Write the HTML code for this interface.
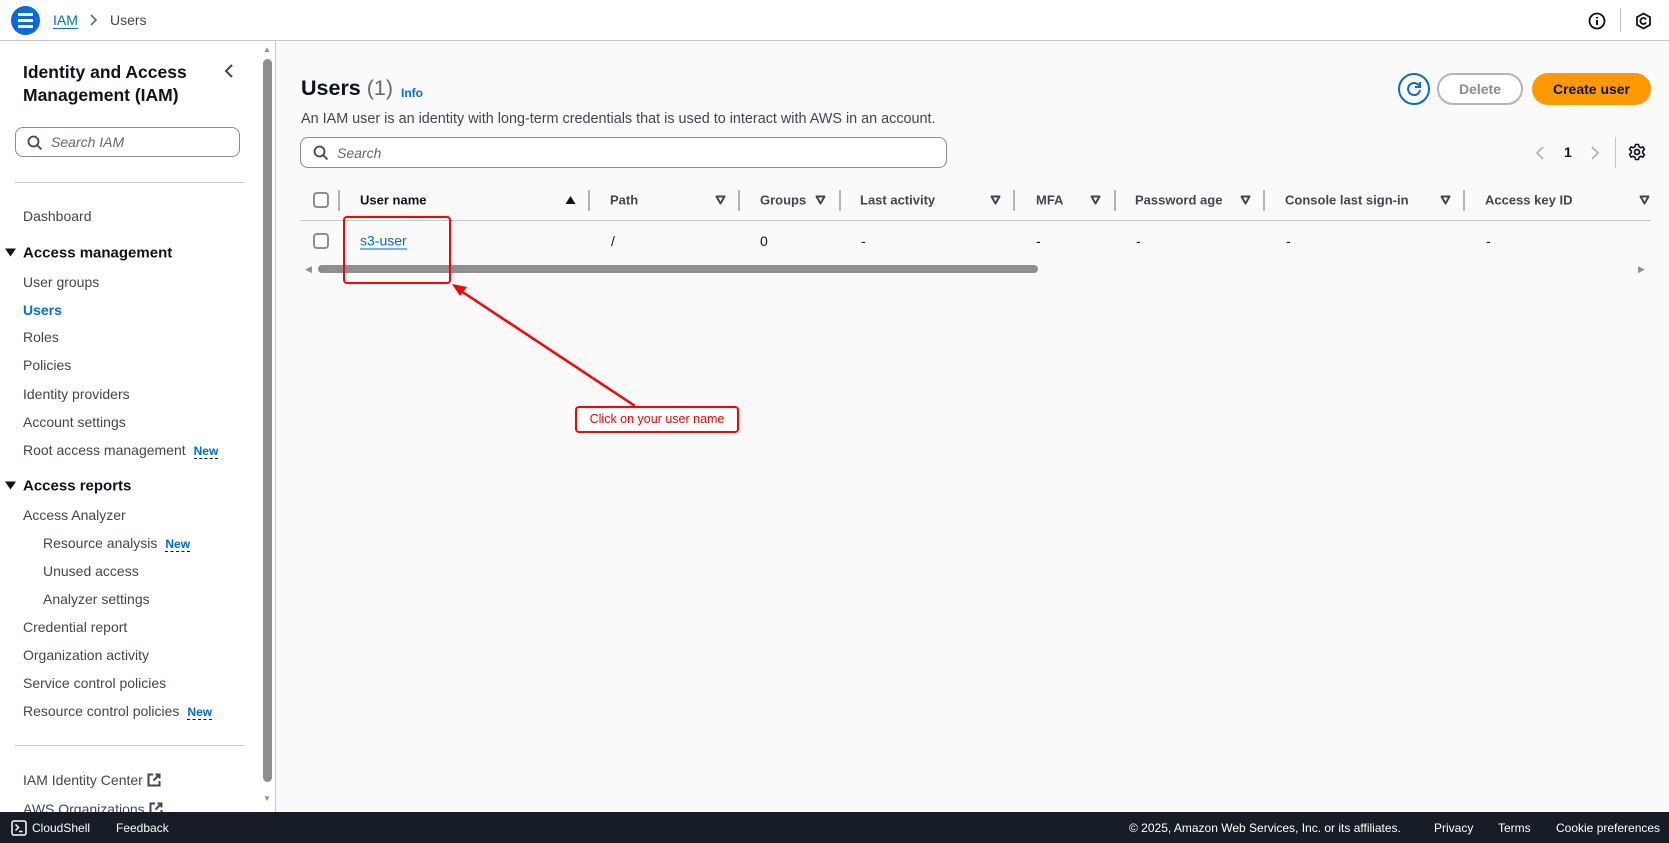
<!DOCTYPE html>
<html><head><meta charset="utf-8"><style>
*{box-sizing:border-box;margin:0;padding:0}
body{width:1669px;height:843px;overflow:hidden;font-family:"Liberation Sans",sans-serif;font-size:14px;color:#0f141a;background:#fafafa;position:relative}
.a{position:absolute;white-space:nowrap}
.hdr{position:absolute;left:0;top:0;width:1669px;height:41px;background:#fff;border-bottom:1px solid #c6c6cd}
.side{position:absolute;left:0;top:41px;width:276px;height:771px;background:#fff;border-right:1px solid #c6c6cd}
.nav{position:absolute;left:23px;color:#424650;font-size:14px;transform:translateY(-50%)}
.sec{position:absolute;left:23px;font-weight:bold;font-size:15px;transform:translateY(-50%)}
.sec svg{position:absolute;left:-18px;top:4px}
.new{color:#006ce0;font-weight:bold;font-size:12px;border-bottom:1px dashed #0f141a;margin-left:8px}
.th{position:absolute;top:200px;transform:translateY(-50%);font-weight:bold;color:#424650;font-size:13px}
.dv{position:absolute;top:190px;width:2px;height:21px;background:#b4b4bb}
.tri{position:absolute;top:195px}
.td{position:absolute;top:241px;transform:translateY(-50%)}
.foot{position:absolute;left:0;top:812px;width:1669px;height:31px;background:#161d26;color:#fff;font-size:12px}
.foot span{position:absolute;top:9px}
</style></head><body>
<div class="hdr">
 <div class="a" style="left:11px;top:6px;width:29px;height:29px;border-radius:50%;background:#006ce0"></div>
 <div class="a" style="left:18px;top:13px;width:15px;height:2.5px;background:#fff;box-shadow:0 6px 0 #fff,0 12px 0 #fff"></div>
 <div class="a" style="left:53px;top:12px;color:#006ce0;border-bottom:1px solid #006ce0;line-height:16px">IAM</div>
 <svg class="a" style="left:88px;top:13px" width="10" height="14" viewBox="0 0 10 14"><path d="M3 2l5 5-5 5" fill="none" stroke="#656871" stroke-width="1.6"/></svg>
 <div class="a" style="left:110px;top:12px;color:#424650">Users</div>
 <svg class="a" style="left:1588px;top:12px" width="18" height="18" viewBox="0 0 18 18"><circle cx="9" cy="9" r="7.5" fill="none" stroke="#0f141a" stroke-width="1.8"/><path d="M9 8v5M9 5v1.5" stroke="#0f141a" stroke-width="2"/></svg>
 <div class="a" style="left:1620px;top:8px;width:1px;height:24px;background:#c6c6cd"></div>
 <svg class="a" style="left:1635px;top:12px" width="17" height="18" viewBox="0 0 17 18"><path d="M8.5 1.5l6.5 3.7v7.6l-6.5 3.7-6.5-3.7V5.2z" fill="none" stroke="#0f141a" stroke-width="1.8"/><path d="M11 7.5a3 3 0 1 0 0 3" fill="none" stroke="#0f141a" stroke-width="1.8"/></svg>
</div>
<div class="side">
 <div class="a" style="left:23px;top:20px;font-weight:bold;font-size:17.5px;line-height:23px;white-space:normal;width:200px">Identity and Access Management (IAM)</div>
 <svg class="a" style="left:223px;top:22px" width="12" height="16" viewBox="0 0 12 16"><path d="M9 2L3 8l6 6" fill="none" stroke="#424650" stroke-width="2"/></svg>
 <div class="a" style="left:15px;top:86px;width:225px;height:30px;border:1px solid #8c8c94;border-radius:8px"></div>
 <svg class="a" style="left:27px;top:94px" width="16" height="16" viewBox="0 0 16 16"><circle cx="6.5" cy="6.5" r="5" fill="none" stroke="#424650" stroke-width="1.8"/><path d="M10 10l4.5 4.5" stroke="#424650" stroke-width="1.8"/></svg>
 <div class="a" style="left:51px;top:93px;color:#656871;font-style:italic">Search IAM</div>
 <div class="a" style="left:15px;top:141px;width:229px;height:1px;background:#c6c6cd"></div>
 <div class="nav" style="top:175px">Dashboard</div>
 <div class="sec" style="top:212px"><svg width="11" height="9" viewBox="0 0 11 9"><path d="M0 0h11L5.5 8z" fill="#0f141a"/></svg>Access management</div>
 <div class="nav" style="top:241px">User groups</div>
 <div class="nav" style="top:269px;color:#006ce0;font-weight:bold">Users</div>
 <div class="nav" style="top:296px">Roles</div>
 <div class="nav" style="top:324px">Policies</div>
 <div class="nav" style="top:353px">Identity providers</div>
 <div class="nav" style="top:381px">Account settings</div>
 <div class="nav" style="top:409px">Root access management<span class="new">New</span></div>
 <div class="sec" style="top:445px"><svg width="11" height="9" viewBox="0 0 11 9"><path d="M0 0h11L5.5 8z" fill="#0f141a"/></svg>Access reports</div>
 <div class="nav" style="top:474px">Access Analyzer</div>
 <div class="nav" style="top:502px;left:43px">Resource analysis<span class="new">New</span></div>
 <div class="nav" style="top:530px;left:43px">Unused access</div>
 <div class="nav" style="top:558px;left:43px">Analyzer settings</div>
 <div class="nav" style="top:586px">Credential report</div>
 <div class="nav" style="top:614px">Organization activity</div>
 <div class="nav" style="top:642px">Service control policies</div>
 <div class="nav" style="top:670px">Resource control policies<span class="new">New</span></div>
 <div class="a" style="left:15px;top:704px;width:229px;height:1px;background:#c6c6cd"></div>
 <div class="nav" style="top:739px">IAM Identity Center <svg width="14" height="14" viewBox="0 0 14 14" style="vertical-align:-2px"><path d="M6 1.5H1.5v11h11V8M8.5 1.5h4v4M12.5 1.5L6.5 7.5" fill="none" stroke="#424650" stroke-width="2"/></svg></div>
 <div class="nav" style="top:768px">AWS Organizations <svg width="14" height="14" viewBox="0 0 14 14" style="vertical-align:-2px"><path d="M6 1.5H1.5v11h11V8M8.5 1.5h4v4M12.5 1.5L6.5 7.5" fill="none" stroke="#424650" stroke-width="2"/></svg></div>
 <div class="a" style="left:263px;top:18px;width:9px;height:723px;background:#8f8f8f;border-radius:5px"></div>
 <div class="a" style="left:263px;top:4px;font-size:8px;color:#8f8f8f">&#9650;</div>
 <div class="a" style="left:263px;top:753px;font-size:8px;color:#8f8f8f">&#9660;</div>
</div>
<div class="a" style="left:301px;top:76px;font-size:21.5px;font-weight:bold">Users <span style="font-weight:normal;color:#656871">(1)</span></div>
<div class="a" style="left:401px;top:86px;font-size:12px;font-weight:bold;color:#006ce0">Info</div>
<div class="a" style="left:301px;top:111px;color:#424650;font-size:14.4px">An IAM user is an identity with long-term credentials that is used to interact with AWS in an account.</div>
<div class="a" style="left:300px;top:137px;width:647px;height:31px;border:1px solid #8c8c94;border-radius:8px;background:#fff"></div>
<svg class="a" style="left:313px;top:145px" width="16" height="16" viewBox="0 0 16 16"><circle cx="6.5" cy="6.5" r="5" fill="none" stroke="#424650" stroke-width="1.8"/><path d="M10 10l4.5 4.5" stroke="#424650" stroke-width="1.8"/></svg>
<div class="a" style="left:337px;top:145px;color:#656871;font-style:italic">Search</div>
<div class="a" style="left:1398px;top:73px;width:32px;height:32px;border:2px solid #006ce0;border-radius:50%;background:#fff"></div>
<svg class="a" style="left:1405px;top:80px" width="18" height="18" viewBox="0 0 18 18"><path d="M14.5 6.5A6 6 0 1 0 15 10" fill="none" stroke="#006ce0" stroke-width="2"/><path d="M15 2v5h-5" fill="none" stroke="#006ce0" stroke-width="2"/></svg>
<div class="a" style="left:1437px;top:73px;width:86px;height:32px;border:2px solid #b4b4bb;border-radius:16px;background:#fff;color:#8c8c94;font-weight:bold;text-align:center;line-height:28px">Delete</div>
<div class="a" style="left:1532px;top:73px;width:119px;height:32px;border-radius:16px;background:#ff9900;color:#0f141a;font-weight:bold;text-align:center;line-height:32px">Create user</div>
<svg class="a" style="left:1534px;top:145px" width="12" height="16" viewBox="0 0 12 16"><path d="M9 2L3 8l6 6" fill="none" stroke="#b4b4bb" stroke-width="1.8"/></svg>
<div class="a" style="left:1564px;top:144px;font-weight:bold">1</div>
<svg class="a" style="left:1589px;top:145px" width="12" height="16" viewBox="0 0 12 16"><path d="M3 2l6 6-6 6" fill="none" stroke="#b4b4bb" stroke-width="1.8"/></svg>
<div class="a" style="left:1615px;top:137px;width:1px;height:31px;background:#c6c6cd"></div>
<svg class="a" style="left:1628px;top:143px" width="18" height="18" viewBox="0 0 18 18"><circle cx="9" cy="9" r="2.5" fill="none" stroke="#0f141a" stroke-width="1.8"/><path d="M7.5 1.5h3l.5 2.2 1.8 1 2.1-.8 1.5 2.6-1.7 1.5v2l1.7 1.5-1.5 2.6-2.1-.8-1.8 1-.5 2.2h-3l-.5-2.2-1.8-1-2.1.8L1.6 11.4l1.7-1.5v-2L1.6 6.5l1.5-2.6 2.1.8 1.8-1z" fill="none" stroke="#0f141a" stroke-width="1.6"/></svg>
<div class="a" style="left:313px;top:192px;width:16px;height:16px;border:2px solid #8c8c94;border-radius:4px;background:#fff"></div>
<div class="dv" style="left:338px"></div>
<div class="th" style="left:360px;color:#0f141a">User name</div>
<svg class="tri" style="left:565px" width="11" height="10" viewBox="0 0 11 10"><path d="M0.5 9h10L5.5 1z" fill="#0f141a"/></svg>
<div class="dv" style="left:588px"></div>
<div class="th" style="left:610px">Path</div>
<div class="dv" style="left:738px"></div>
<div class="th" style="left:760px;width:50px;overflow:hidden">Groups</div>
<div class="dv" style="left:839px"></div>
<div class="th" style="left:860px">Last activity</div>
<div class="dv" style="left:1013px"></div>
<div class="th" style="left:1036px">MFA</div>
<div class="dv" style="left:1114px"></div>
<div class="th" style="left:1135px">Password age</div>
<div class="dv" style="left:1263px"></div>
<div class="th" style="left:1285px">Console last sign-in</div>
<div class="dv" style="left:1463px"></div>
<div class="th" style="left:1485px">Access key ID</div>
<svg class="tri" style="left:715px" width="11" height="10" viewBox="0 0 11 10"><path d="M1.5 1.5h8L5.5 8.5z" fill="none" stroke="#424650" stroke-width="2" stroke-linejoin="round"/></svg>
<svg class="tri" style="left:815px" width="11" height="10" viewBox="0 0 11 10"><path d="M1.5 1.5h8L5.5 8.5z" fill="none" stroke="#424650" stroke-width="2" stroke-linejoin="round"/></svg>
<svg class="tri" style="left:990px" width="11" height="10" viewBox="0 0 11 10"><path d="M1.5 1.5h8L5.5 8.5z" fill="none" stroke="#424650" stroke-width="2" stroke-linejoin="round"/></svg>
<svg class="tri" style="left:1090px" width="11" height="10" viewBox="0 0 11 10"><path d="M1.5 1.5h8L5.5 8.5z" fill="none" stroke="#424650" stroke-width="2" stroke-linejoin="round"/></svg>
<svg class="tri" style="left:1240px" width="11" height="10" viewBox="0 0 11 10"><path d="M1.5 1.5h8L5.5 8.5z" fill="none" stroke="#424650" stroke-width="2" stroke-linejoin="round"/></svg>
<svg class="tri" style="left:1440px" width="11" height="10" viewBox="0 0 11 10"><path d="M1.5 1.5h8L5.5 8.5z" fill="none" stroke="#424650" stroke-width="2" stroke-linejoin="round"/></svg>
<svg class="tri" style="left:1639px" width="11" height="10" viewBox="0 0 11 10"><path d="M1.5 1.5h8L5.5 8.5z" fill="none" stroke="#424650" stroke-width="2" stroke-linejoin="round"/></svg>
<div class="a" style="left:300px;top:220px;width:1351px;height:1px;background:#c6c6cd"></div>
<div class="a" style="left:313px;top:233px;width:16px;height:16px;border:2px solid #8c8c94;border-radius:4px;background:#fff"></div>
<div class="td" style="left:360px;color:#006ce0;border-bottom:1px solid #006ce0;line-height:16px">s3-user</div>
<div class="td" style="left:611px">/</div>
<div class="td" style="left:760px">0</div>
<div class="td" style="left:861px">-</div>
<div class="td" style="left:1036px">-</div>
<div class="td" style="left:1136px">-</div>
<div class="td" style="left:1286px">-</div>
<div class="td" style="left:1486px">-</div>
<div class="a" style="left:305px;top:264px;font-size:9px;color:#8f8f8f">&#9664;</div>
<div class="a" style="left:318px;top:265px;width:720px;height:8px;border-radius:4px;background:#8f8f8f"></div>
<div class="a" style="left:1638px;top:264px;font-size:9px;color:#8f8f8f">&#9654;</div>
<div class="a" style="left:343px;top:216px;width:108px;height:68px;border:2.5px solid #f00;border-radius:4px"></div>
<svg class="a" style="left:440px;top:275px" width="200" height="135" viewBox="440 275 200 135"><path d="M635 406L458 289" stroke="#f00" stroke-width="2.5"/><path d="M452 284l15 3-7 9z" fill="#f00"/></svg>
<div class="a" style="left:575px;top:406px;width:164px;height:27px;border:2.5px solid #f00;border-radius:4px;background:#fff;color:#f00;font-size:12.5px;line-height:22px;text-align:center">Click on your user name</div>
<div class="foot">
 <svg class="a" style="left:11px;top:8px" width="16" height="16" viewBox="0 0 16 16"><rect x="1" y="1" width="14" height="14" rx="2" fill="none" stroke="#fff" stroke-width="1.5"/><path d="M4.5 4.5l3 3-3 3M8 11.5h3.5" fill="none" stroke="#fff" stroke-width="1.5"/></svg>
 <span style="left:32px">CloudShell</span><span style="left:116px">Feedback</span>
 <span style="left:1129px">© 2025, Amazon Web Services, Inc. or its affiliates.</span>
 <span style="left:1434px">Privacy</span><span style="left:1498px">Terms</span><span style="left:1556px">Cookie preferences</span>
</div>
</body></html>
